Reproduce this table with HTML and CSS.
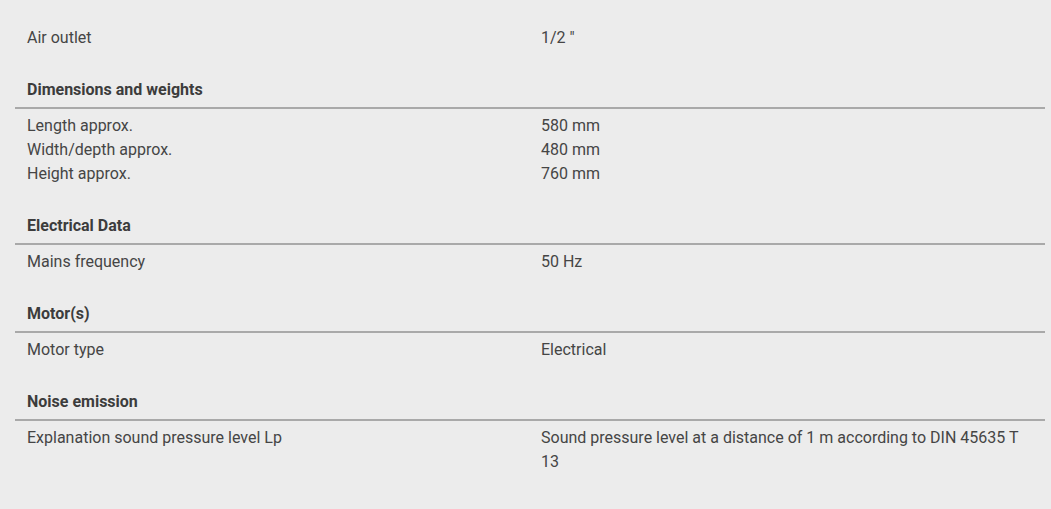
FILE: index.html
```html
<!DOCTYPE html>
<html lang="en">
<head>
<meta charset="utf-8">
<link rel="stylesheet" href="styles.css">
</head>
<body>
<div class="specs">
  <section class="group group-first">
    <div class="rows">
      <div class="row"><div class="label">Air outlet</div><div class="value">1/2 "</div></div>
    </div>
  </section>
  <section class="group">
    <h3 class="group-title">Dimensions and weights</h3>
    <div class="rows">
      <div class="row"><div class="label">Length approx.</div><div class="value">580 mm</div></div>
      <div class="row"><div class="label">Width/depth approx.</div><div class="value">480 mm</div></div>
      <div class="row"><div class="label">Height approx.</div><div class="value">760 mm</div></div>
    </div>
  </section>
  <section class="group">
    <h3 class="group-title">Electrical Data</h3>
    <div class="rows">
      <div class="row"><div class="label">Mains frequency</div><div class="value">50 Hz</div></div>
    </div>
  </section>
  <section class="group">
    <h3 class="group-title">Motor(s)</h3>
    <div class="rows">
      <div class="row"><div class="label">Motor type</div><div class="value">Electrical</div></div>
    </div>
  </section>
  <section class="group">
    <h3 class="group-title">Noise emission</h3>
    <div class="rows">
      <div class="row"><div class="label">Explanation sound pressure level Lp</div><div class="value">Sound pressure level at a distance of 1 m according to DIN 45635 T 13</div></div>
    </div>
  </section>
</div>
</body>
</html>
```
FILE: styles.css
```css
html, body {
  margin: 0;
  padding: 0;
  background: #ececec;
}
body {
  font-family: Roboto, "Liberation Sans", sans-serif;
  font-size: 16px;
  line-height: 24px;
  color: #454545;
}
.specs {
  padding: 26px 6px 34px 15px;
  display: flex;
  flex-direction: column;
  gap: 28px;
}
.group-title {
  margin: 0;
  padding: 0 12px 5px;
  font-size: 16px;
  line-height: 24px;
  font-weight: 700;
  color: #3c3c3c;
  border-bottom: 2px solid #a9a9a9;
}
.rows {
  padding-top: 5px;
}
.group-first .rows {
  padding-top: 0;
}
.row {
  display: grid;
  grid-template-columns: 514px 1fr;
}
.label, .value {
  padding: 0 12px;
}
```
